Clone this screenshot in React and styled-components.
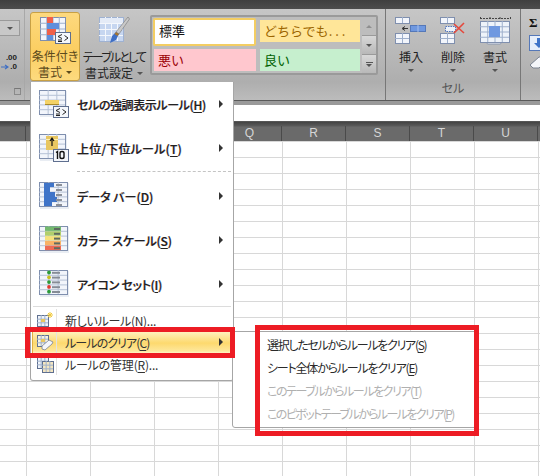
import React from 'react';
import styled, { createGlobalStyle } from 'styled-components';

const GlobalStyle = createGlobalStyle`
  html, body {
    margin: 0;
    padding: 0;
    background: #fff;
  }
  body {
    font-family: "Noto Sans CJK JP", "Noto Sans", sans-serif;
    font-feature-settings: "palt";
    overflow: hidden;
  }
`;

// small table used as the base of most of the icons
const Table = ({ x = 0, y = 0, w, h, cols, rows, fill = '#eef3fa', line = '#9fb0cc', edge = '#7f8fae' }) => {
  const cw = w / cols;
  const rh = h / rows;
  return (
    <g>
      <rect x={x + 0.5} y={y + 0.5} width={w} height={h} fill={fill} stroke={edge} />
      {Array.from({ length: cols - 1 }, (_, i) => (
        <line key={'c' + i} x1={x + 0.5 + cw * (i + 1)} x2={x + 0.5 + cw * (i + 1)} y1={y} y2={y + h} stroke={line} />
      ))}
      {Array.from({ length: rows - 1 }, (_, i) => (
        <line key={'r' + i} y1={y + 0.5 + rh * (i + 1)} y2={y + 0.5 + rh * (i + 1)} x1={x} x2={x + w} stroke={line} />
      ))}
    </g>
  );
};

const LessBadge = ({ x, y }) => (
  <g>
    <rect x={x + 0.5} y={y + 0.5} width="15" height="11" fill="#f4f7fc" stroke="#5f6f8f" />
    <path d={`M${x + 7} ${y + 2.5}l-4 2 4 2M${x + 3} ${y + 8}h4M${x + 3} ${y + 9.5}h4M${x + 9.5} ${y + 3.5}l3.5 2.5-3.5 2.5`} fill="none" stroke="#222" />
  </g>
);

const CondFormatIcon = () => (
  <svg width="32" height="28" viewBox="0 0 32 28">
    <Table x={1} y={0} w={25} h={23} cols={4} rows={4} fill="#f2f5fb" />
    <rect x="8" y="0" width="6" height="6" fill="#f0604a" />
    <rect x="8" y="6" width="12" height="6" fill="#5f8fdc" />
    <rect x="8" y="12" width="9" height="6" fill="#f0604a" />
    <rect x="8" y="18" width="6" height="5" fill="#5f8fdc" />
    <LessBadge x={16} y={15} />
  </svg>
);

const TableStyleIcon = () => (
  <svg width="32" height="30" viewBox="0 0 32 30">
    <Table x={1} y={1} w={24} h={24} cols={4} rows={4} fill="#c6d6f0" line="#f4f7fc" edge="#9fb2d2" />
    <rect x="2" y="2" width="23" height="5" fill="#e4ebf7" />
    <path d="M30 1l1.5 2L21 18l-3-2z" fill="#c9c9c9" stroke="#777" strokeWidth="0.6" />
    <path d="M18 16l3 2-3 6-6 3 2-7z" fill="#3f6fc4" />
    <path d="M18 16l3 2-1.5 2-3-2z" fill="#a8752c" />
  </svg>
);

const HighlightIcon = () => (
  <svg width="32" height="30" viewBox="0 0 32 30">
    <rect x="2" y="2" width="27" height="26" fill="#c9d2e0" opacity="0.4" />
    <Table x={1} y={1} w={26} h={24} cols={3} rows={5} fill="#f2f5fb" line="#b6c2d6" />
    <rect x="7" y="11" width="14" height="5" fill="#f3d266" />
    <rect x="7" y="15" width="14" height="1" fill="#a88a2c" />
    <LessBadge x={15} y={17} />
  </svg>
);

const TopTenIcon = () => (
  <svg width="32" height="30" viewBox="0 0 32 30">
    <rect x="2" y="2" width="27" height="26" fill="#c9d2e0" opacity="0.4" />
    <Table x={1} y={1} w={26} h={24} cols={3} rows={5} fill="#f2f5fb" line="#b6c2d6" />
    <rect x="8" y="3" width="12" height="14" fill="#e8c660" />
    <rect x="8" y="6" width="12" height="1" fill="#fff0b0" />
    <path d="M14 13V6M12 8l2-3 2 3" fill="none" stroke="#111" strokeWidth="1.2" />
    <rect x="15.5" y="16.5" width="15" height="12" fill="#f4f7fc" stroke="#5f6f8f" />
    <path d="M18 19.5l1.5-1V26M22 20c0-2 4-2 4 0v4c0 2-4 2-4 0z" fill="none" stroke="#111" strokeWidth="1.4" />
  </svg>
);

const DataBarIcon = () => (
  <svg width="32" height="30" viewBox="0 0 32 30">
    <rect x="2" y="2" width="29" height="26" fill="#c9d2e0" opacity="0.4" />
    <Table x={1} y={1} w={28} h={24} cols={3} rows={5} fill="#f2f5fb" line="#b6c2d6" />
    <rect x="6" y="2" width="10" height="4" fill="#3f74c8" />
    <rect x="6" y="6" width="6" height="5" fill="#3f74c8" />
    <rect x="6" y="11" width="11" height="5" fill="#3f74c8" />
    <rect x="6" y="16" width="13" height="5" fill="#3f74c8" />
    <rect x="6" y="21" width="8" height="4" fill="#3f74c8" />
    {[3, 8, 13, 18, 23].map((y) => (
      <rect key={y} x="18" y={y} width="6" height="2" fill="#8a8f98" />
    ))}
  </svg>
);

const ColorScaleIcon = () => (
  <svg width="32" height="30" viewBox="0 0 32 30">
    <rect x="2" y="2" width="29" height="26" fill="#c9d2e0" opacity="0.4" />
    <Table x={1} y={1} w={28} h={24} cols={3} rows={5} fill="#f2f5fb" line="#b6c2d6" />
    {['#74b96e', '#b0cf6c', '#f5e27a', '#f9b266', '#ee6a55'].map((c, i) => (
      <g key={c}>
        <rect x="7" y={1.5 + i * 4.8} width="16" height="4.4" fill={c} />
        <rect x="16" y={3 + i * 4.8} width="6" height="2" fill="#5e6a60" />
      </g>
    ))}
  </svg>
);

const IconSetIcon = () => (
  <svg width="32" height="30" viewBox="0 0 32 30">
    <rect x="2" y="2" width="29" height="26" fill="#c9d2e0" opacity="0.4" />
    <Table x={1} y={1} w={28} h={24} cols={3} rows={5} fill="#f2f5fb" line="#b6c2d6" />
    {['#2c9a3a', '#c9c020', '#2c9a3a', '#e23b30', '#2c9a3a'].map((c, i) => (
      <g key={i}>
        <circle cx="11" cy={3.5 + i * 4.8} r="1.9" fill={c} />
        <rect x="14" y={2.8 + i * 4.8} width="8" height="2" fill="#868c96" />
      </g>
    ))}
  </svg>
);

const NewRuleIcon = () => (
  <svg width="18" height="18" viewBox="0 0 18 18">
    <Table x={1} y={4} w={11} h={11} cols={3} rows={3} fill="#eef3fa" edge="#5f6f8f" />
    <rect x="5" y="8" width="4" height="3" fill="#e8c660" />
    <path d="M14 1v6M11 4h6M12 2l4 4M16 2l-4 4" stroke="#f0c93c" strokeWidth="1" />
  </svg>
);

const ClearRuleIcon = () => (
  <svg width="18" height="18" viewBox="0 0 18 18">
    <Table x={1} y={2} w={11} h={11} cols={3} rows={3} fill="#f6f3e2" edge="#5f6f8f" />
    <rect x="5" y="6" width="4" height="3" fill="#e8c660" />
    <path d="M6 13l7-6 4 2-1 2-7 6-3-1z" fill="#f4f6fa" stroke="#7a8290" strokeWidth="0.8" />
  </svg>
);

const ManageRuleIcon = () => (
  <svg width="18" height="18" viewBox="0 0 18 18">
    <Table x={1} y={2} w={11} h={11} cols={3} rows={3} fill="#eef3fa" edge="#5f6f8f" />
    <Table x={6} y={6} w={11} h={11} cols={3} rows={3} fill="#f4e6c0" edge="#5f6f8f" />
  </svg>
);

const InsertIcon = () => (
  <svg width="32" height="27" viewBox="0 0 32 27">
    <Table x={0} y={0} w={14} h={6} cols={2} rows={1} fill="#f2f5fb" edge="#7f8fae" />
    <Table x={0} y={16} w={14} h={10} cols={2} rows={2} fill="#f2f5fb" edge="#7f8fae" />
    <rect x="15.5" y="8.5" width="15" height="6" fill="#6f98e0" stroke="#5578b8" />
    <line x1="23" x2="23" y1="8" y2="15" stroke="#a8c0ea" />
    <path d="M13 11.5H8M10 9.5l-3 2 3 2" fill="none" stroke="#333" />
  </svg>
);

const DeleteIcon = () => (
  <svg width="26" height="27" viewBox="0 0 26 27">
    <Table x={0} y={0} w={14} h={6} cols={2} rows={1} fill="#f2f5fb" edge="#7f8fae" />
    <Table x={0} y={16} w={14} h={10} cols={2} rows={2} fill="#f2f5fb" edge="#7f8fae" />
    <rect x="5.5" y="9.5" width="10" height="5" fill="#eef3fa" stroke="#4f74c0" strokeDasharray="1.5 1" />
    <path d="M14 7l10 9M24 6l-10 10" stroke="#e5483c" strokeWidth="1.6" />
  </svg>
);

const FormatIcon = () => (
  <svg width="31" height="28" viewBox="0 0 31 28">
    <path d="M0.5 0v3M30.5 0v3M0 1.5h30M10 0v3M20 0v3" fill="none" stroke="#444" strokeDasharray="2 1" />
    <rect x="7" y="24" width="14" height="3" rx="1" fill="#f2f5fb" stroke="#8a97b0" />
    <Table x={0} y={4} w={29} h={21} cols={4} rows={4} fill="#eef3fa" />
    <rect x="9" y="9" width="11" height="11" fill="#6f98e0" />
  </svg>
);

const EraserIcon = () => (
  <svg width="20" height="14" viewBox="0 0 20 14">
    <path d="M1 10l9-8h8l1 2-9 9H4z" fill="#f4f6fa" stroke="#7a8290" />
  </svg>
);

const FillIcon = () => (
  <svg width="20" height="16" viewBox="0 0 20 16">
    <rect x="0.5" y="0.5" width="19" height="15" fill="#e6eefa" stroke="#5578b8" />
    <path d="M8 3h4v5h3l-5 5-5-5h3z" fill="#3f74c8" />
  </svg>
);

const DecimalArrow = () => (
  <svg width="8" height="6" viewBox="0 0 8 6">
    <path d="M0 3h6M4 1l3 2-3 2" fill="none" stroke="#3f6fc4" strokeWidth="1.2" />
  </svg>
);

const Page = styled.div`
  width: 540px;
  height: 476px;
  position: relative;
  overflow: hidden;
  display: flex;
  flex-direction: column;
  background: #fff;
`;

const TitleBar = styled.div`
  height: 9px;
  flex: none;
  background: linear-gradient(#3f3f3f, #4c4c4c);
`;

const Ribbon = styled.div`
  height: 91px;
  flex: none;
  display: flex;
  background: linear-gradient(#c6c6c6, #b6b6b6 55%, #aeaeae 80%, #bcbcbc);
  border-bottom: 1px solid #5a5a5a;
`;

const RibbonFoot = styled.div`
  height: 4px;
  flex: none;
  background: #9a9a9a;
`;

const Group = styled.div`
  flex: none;
  width: ${(p) => p.$width}px;
  border-right: 1px solid ${(p) => p.$line || '#777'};
  box-sizing: border-box;
  display: flex;
  flex-direction: column;
`;

const NumberGroup = styled(Group)`
  padding-top: 11px;
  align-items: flex-end;
`;

const StubSelect = styled.div`
  width: 20px;
  height: 16px;
  margin-right: 4px;
  box-sizing: border-box;
  border: 1px solid #9a9a9a;
  border-left: 0;
  background: #c8c8c8;
  display: flex;
  align-items: center;
  justify-content: center;
`;

const DownArrow = styled.span`
  display: inline-block;
  width: 0;
  height: 0;
  border-left: 3px solid transparent;
  border-right: 3px solid transparent;
  border-top: 3px solid ${(p) => p.$color || '#555'};
`;

const Decimal = styled.div`
  margin: 17px 7px 0 0;
  display: flex;
  flex-direction: column;
  align-items: flex-end;
  font: bold 8px/9px "Liberation Sans", sans-serif;
  color: #222;
`;

const DecimalLine = styled.div`
  display: flex;
  align-items: center;
  gap: 1px;
`;

const Launcher = styled.div`
  width: 5px;
  height: 5px;
  margin: 17px 3px 0 0;
  border: 1px solid #8a8a8a;
  border-top-color: #777;
`;

const StylesGroup = styled(Group)`
  flex-direction: row;
  padding: 3px 0 0 5px;
  align-items: flex-start;
`;

const BigButton = styled.div`
  flex: none;
  width: ${(p) => p.$width}px;
  height: 69px;
  box-sizing: border-box;
  padding-top: 4px;
  display: flex;
  flex-direction: column;
  align-items: center;
  border-radius: 3px;
  font-size: 12px;
  line-height: 16px;
  color: ${(p) => (p.$active ? '#5c4a1c' : '#222')};
  ${(p) =>
    p.$active &&
    `
    background: linear-gradient(#fdd97e, #fbce62 55%, #fdda7e);
    border: 1px solid #c8a044;
  `}
`;

const BigIconSlot = styled.div`
  height: 32px;
  margin-bottom: 2px;
  display: flex;
  justify-content: center;
  align-items: flex-start;
`;

const Label = styled.div`
  white-space: nowrap;
  text-align: center;
  display: flex;
  align-items: center;
  gap: 4px;
  letter-spacing: ${(p) => p.$spacing || 0}px;
`;

const Gallery = styled.div`
  flex: none;
  margin: 3px 0 0 2px;
  width: 228px;
  height: 60px;
  box-sizing: border-box;
  display: flex;
  border: 2px solid #9a9a9a;
  border-radius: 2px;
  background: #bdbdbd;
`;

const StyleGrid = styled.div`
  flex: 1;
  display: grid;
  grid-template-columns: 102px 100px;
  grid-template-rows: 27px 23px;
  column-gap: 4px;
  row-gap: 2px;
  padding: 2px 0 0 2px;
`;

const StyleCell = styled.div`
  box-sizing: border-box;
  font-size: 13px;
  font-feature-settings: normal;
  line-height: 22px;
  padding-left: 4px;
  white-space: nowrap;
  color: ${(p) => p.$color};
  background: ${(p) => p.$bg};
  ${(p) => p.$selected && 'border: 2px solid #f3cd62; border-radius: 2px; padding-left: 4px; margin: -1px 0 0 -1px;'}
  ${(p) => !p.$selected && 'margin: 1px 0 0 0; height: 22px;'}
`;

const Dots = styled.span`
  letter-spacing: 3px;
`;

const GalleryScroll = styled.div`
  flex: none;
  width: 14px;
  display: flex;
  flex-direction: column;
`;

const ScrollButton = styled.div`
  flex: 1;
  display: flex;
  align-items: center;
  justify-content: center;
  background: ${(p) => (p.$dim ? '#bdbdbd' : 'linear-gradient(#d8d8d8, #b8b8b8)')};
  border-top: 1px solid #9a9a9a;
  &:first-child {
    border-top: 0;
  }
`;

const UpArrow = styled.span`
  width: 0;
  height: 0;
  border-left: 3px solid transparent;
  border-right: 3px solid transparent;
  border-bottom: 3px solid #8f8f8f;
`;

const MoreArrow = styled.span`
  display: flex;
  flex-direction: column;
  align-items: center;
  gap: 1px;
  &::before {
    content: '';
    width: 7px;
    height: 1px;
    background: #555;
  }
`;

const CellsGroup = styled(Group)`
  align-items: stretch;
`;

const CellButtons = styled.div`
  display: flex;
  padding: 8px 0 0 4px;
  flex: 1;
`;

const CellButton = styled.div`
  width: 42px;
  display: flex;
  flex-direction: column;
  align-items: center;
  font-size: 12px;
  line-height: 16px;
  color: #222;
`;

const CellIconSlot = styled.div`
  height: 32px;
  margin-bottom: 0;
  display: flex;
  align-items: flex-start;
  justify-content: center;
`;

const CellArrow = styled.div`
  margin-top: 4px;
  line-height: 6px;
  display: flex;
`;

const GroupName = styled.div`
  text-align: center;
  font-size: 12px;
  line-height: 16px;
  color: #555;
  padding-bottom: 4px;
`;

const EditGroup = styled.div`
  flex: 1;
  padding: 6px 0 0 8px;
  display: flex;
  flex-direction: column;
  gap: 4px;
  overflow: hidden;
`;

const Sigma = styled.div`
  font: bold 13px/16px "Liberation Serif", serif;
  color: #111;
`;

const FormulaBar = styled.div`
  height: 16px;
  flex: none;
  background: #fff;
`;

const HeaderRow = styled.div`
  flex: none;
  height: 20px;
  display: flex;
  box-sizing: border-box;
  border-top: 1px solid #555;
  background: linear-gradient(#444 0, #5a5a5a 4px, #6a6a6a 5px);
  padding-top: 4px;
`;

const CornerCell = styled.div`
  width: 26px;
  flex: none;
  box-sizing: border-box;
  border-right: 1px solid #4a4a4a;
`;

const ColumnCell = styled.div`
  width: 64px;
  flex: none;
  box-sizing: border-box;
  border-right: 1px solid #4a4a4a;
  text-align: center;
  font: 12px/15px "Liberation Sans", sans-serif;
  color: #d6d6d6;
`;

const Sheet = styled.div`
  flex: 1;
  background-color: #fff;
  background-image:
    linear-gradient(to right, #d8d8d8 1px, transparent 1px),
    linear-gradient(to bottom, #d8d8d8 1px, transparent 1px);
  background-size: 64px 16px;
  background-position: 26px 0;
`;

const Menu = styled.div`
  position: absolute;
  left: 30px;
  top: 82px;
  width: 204px;
  height: 299px;
  box-sizing: border-box;
  background: #fff;
  border: 1px solid #a6a6a6;
  border-top: 0;
  border-radius: 0 0 3px 3px;
  padding: 0 1px;
  display: flex;
  flex-direction: column;
`;

const BigRow = styled.div`
  height: 44px;
  flex: none;
  display: flex;
  align-items: center;
  padding: 0 9px 0 6px;
  font-size: 12px;
  font-weight: 500;
  letter-spacing: ${(p) => p.$spacing}px;
  color: #222;
  /* the reference has ClearType colour fringes on this text */
  text-shadow: -0.4px 0 rgba(225, 120, 30, 0.5), 0.4px 0 rgba(40, 110, 220, 0.5);
`;

const SmallRow = styled.div`
  height: 22px;
  flex: none;
  box-sizing: border-box;
  display: flex;
  align-items: center;
  padding: 0 9px 0 4px;
  font-size: 12px;
  letter-spacing: ${(p) => p.$spacing}px;
  color: #333;
  ${(p) =>
    p.$active &&
    `
    background: linear-gradient(#fff3c4, #fdd96e 55%, #fee79a 90%, #fff3c4);
    border-left: 1px solid #e2b040;
    padding-left: 3px;
  `}
`;

const BigIcon = styled.div`
  width: 32px;
  height: 30px;
  flex: none;
  margin-right: 7px;
`;

const SmallIcon = styled.div`
  width: 18px;
  height: 18px;
  flex: none;
  margin-right: 11px;
`;

const Strip = styled.div`
  position: relative;
  display: flex;
  flex-direction: column;
  &::before {
    content: '';
    position: absolute;
    left: 24px;
    top: 0;
    bottom: 0;
    width: 1px;
    background: #e2e2e2;
  }
`;

const RowText = styled.span`
  flex: 1;
  white-space: nowrap;
`;

const RightArrow = styled.span`
  width: 0;
  height: 0;
  border-top: 4px solid transparent;
  border-bottom: 4px solid transparent;
  border-left: 4px solid #333;
`;

const DottedRule = styled.div`
  height: 1px;
  margin: 1px 1px 1px 45px;
  border-top: 1px dashed #c4c4c4;
`;

const SolidRule = styled.div`
  height: 1px;
  margin: 0 1px 2px;
  background: #dcdcdc;
`;

const SubMenu = styled.div`
  position: absolute;
  left: 232px;
  top: 331px;
  width: 246px;
  height: 97px;
  box-sizing: border-box;
  background: #fff;
  border: 1px solid #a6a6a6;
  border-radius: 3px;
  padding: 1px 0 0 34px;
  display: flex;
  flex-direction: column;
`;

const SubItem = styled.div`
  height: 23px;
  line-height: 23px;
  font-size: 12px;
  white-space: nowrap;
  letter-spacing: ${(p) => p.$spacing}px;
  color: ${(p) => (p.$disabled ? '#b0b0b0' : '#2a2a2a')};
`;

const Key = styled.span`
  text-decoration: underline;
  text-underline-offset: 2px;
`;

const RedFrame = styled.div`
  position: absolute;
  left: ${(p) => p.$left}px;
  top: ${(p) => p.$top}px;
  width: ${(p) => p.$width}px;
  height: ${(p) => p.$height}px;
  box-sizing: border-box;
  border: 5px solid #ed1c24;
  pointer-events: none;
`;

const columns = ['N', 'O', 'P', 'Q', 'R', 'S', 'T', 'U'];

const bigRows = [
  { icon: <HighlightIcon />, name: 'セルの強調表示ルール', key: 'H', spacing: -0.4 },
  { icon: <TopTenIcon />, name: '上位/下位ルール', key: 'T', spacing: 0.2, rule: true },
  { icon: <DataBarIcon />, name: 'データ バー', key: 'D', spacing: 0 },
  { icon: <ColorScaleIcon />, name: 'カラー スケール', key: 'S', spacing: -0.2 },
  { icon: <IconSetIcon />, name: 'アイコン セット', key: 'I', spacing: -0.3 },
];

const subItems = [
  { name: '選択したセルからルールをクリア', key: 'S', spacing: -1.3 },
  { name: 'シート全体からルールをクリア', key: 'E', spacing: -1.2 },
  { name: 'このテーブルからルールをクリア', key: 'T', spacing: -1.45, disabled: true },
  { name: 'このピボットテーブルからルールをクリア', key: 'P', spacing: -1.6, disabled: true },
];

const App = () => {
  return (
    <Page>
      <GlobalStyle />
      <TitleBar />
      <Ribbon>
        <NumberGroup $width={25} $line="#a8a8a8">
          <StubSelect>
            <DownArrow />
          </StubSelect>
          <Decimal>
            <DecimalLine>.00</DecimalLine>
            <DecimalLine>
              <DecimalArrow />
              .0
            </DecimalLine>
          </Decimal>
          <Launcher />
        </NumberGroup>
        <StylesGroup $width={361}>
          <BigButton $width={50} $active>
            <BigIconSlot>
              <CondFormatIcon />
            </BigIconSlot>
            <Label>条件付き</Label>
            <Label>
              書式 <DownArrow $color="#5c4a1c" />
            </Label>
          </BigButton>
          <BigButton $width={68}>
            <BigIconSlot>
              <TableStyleIcon />
            </BigIconSlot>
            <Label $spacing={-1.8}>テーブルとして</Label>
            <Label>
              書式設定 <DownArrow />
            </Label>
          </BigButton>
          <Gallery>
            <StyleGrid>
              <StyleCell $bg="#fff" $color="#111" $selected>
                標準
              </StyleCell>
              <StyleCell $bg="#ffe699" $color="#9c6500">
                どちらでも<Dots>...</Dots>
              </StyleCell>
              <StyleCell $bg="#ffc7ce" $color="#9c0006">
                悪い
              </StyleCell>
              <StyleCell $bg="#c6efce" $color="#006100">
                良い
              </StyleCell>
            </StyleGrid>
            <GalleryScroll>
              <ScrollButton $dim>
                <UpArrow />
              </ScrollButton>
              <ScrollButton>
                <DownArrow />
              </ScrollButton>
              <ScrollButton>
                <MoreArrow>
                  <DownArrow />
                </MoreArrow>
              </ScrollButton>
            </GalleryScroll>
          </Gallery>
        </StylesGroup>
        <CellsGroup $width={135}>
          <CellButtons>
            <CellButton>
              <CellIconSlot>
                <InsertIcon />
              </CellIconSlot>
              挿入
              <CellArrow>
                <DownArrow />
              </CellArrow>
            </CellButton>
            <CellButton>
              <CellIconSlot>
                <DeleteIcon />
              </CellIconSlot>
              削除
              <CellArrow>
                <DownArrow />
              </CellArrow>
            </CellButton>
            <CellButton>
              <CellIconSlot>
                <FormatIcon />
              </CellIconSlot>
              書式
              <CellArrow>
                <DownArrow />
              </CellArrow>
            </CellButton>
          </CellButtons>
          <GroupName>セル</GroupName>
        </CellsGroup>
        <EditGroup>
          <Sigma>Σ</Sigma>
          <FillIcon />
          <EraserIcon />
        </EditGroup>
      </Ribbon>
      <RibbonFoot />
      <FormulaBar />
      <HeaderRow>
        <CornerCell />
        {columns.map((c) => (
          <ColumnCell key={c}>{c}</ColumnCell>
        ))}
      </HeaderRow>
      <Sheet />

      <Menu>
        {bigRows.map((row) => (
          <React.Fragment key={row.name}>
            <BigRow $spacing={row.spacing}>
              <BigIcon>{row.icon}</BigIcon>
              <RowText>
                {row.name}(<Key>{row.key}</Key>)
              </RowText>
              <RightArrow />
            </BigRow>
            {row.rule && <DottedRule />}
          </React.Fragment>
        ))}
        <SolidRule />
        <Strip>
          <SmallRow $spacing={-0.3}>
            <SmallIcon>
              <NewRuleIcon />
            </SmallIcon>
            <RowText>
              新しいルール(<Key>N</Key>)...
            </RowText>
          </SmallRow>
          <SmallRow $active $spacing={-0.9}>
            <SmallIcon>
              <ClearRuleIcon />
            </SmallIcon>
            <RowText>
              ルールのクリア(<Key>C</Key>)
            </RowText>
            <RightArrow />
          </SmallRow>
          <SmallRow $spacing={-0.2}>
            <SmallIcon>
              <ManageRuleIcon />
            </SmallIcon>
            <RowText>
              ルールの管理(<Key>R</Key>)...
            </RowText>
          </SmallRow>
        </Strip>
      </Menu>

      <SubMenu>
        {subItems.map((item) => (
          <SubItem key={item.name} $disabled={item.disabled} $spacing={item.spacing}>
            {item.name}(<Key>{item.key}</Key>)
          </SubItem>
        ))}
      </SubMenu>

      <RedFrame $left={25} $top={327} $width={210} $height={31} />
      <RedFrame $left={255} $top={325} $width={224} $height={111} />
    </Page>
  );
};

export default App;
